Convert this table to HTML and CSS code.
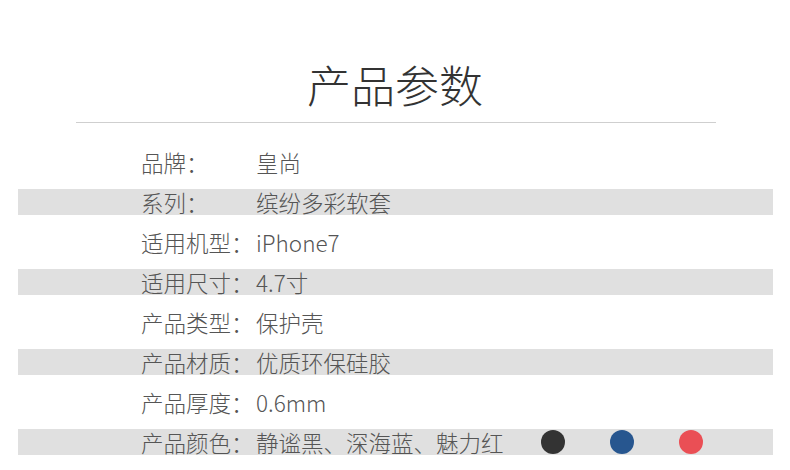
FILE: index.html
```html
<!DOCTYPE html>
<html lang="zh">
<head>
<meta charset="utf-8">
<link rel="stylesheet" href="styles.css">
</head>
<body>
<div class="page">
  <h1 class="title">产品参数</h1>
  <div class="rule"></div>
  <div class="specs">
    <div class="row"><span class="label">品牌：</span><span class="value">皇尚</span></div>
    <div class="row band"><span class="label">系列：</span><span class="value">缤纷多彩软套</span></div>
    <div class="row"><span class="label">适用机型：</span><span class="value">iPhone7</span></div>
    <div class="row band"><span class="label">适用尺寸：</span><span class="value">4.7寸</span></div>
    <div class="row"><span class="label">产品类型：</span><span class="value">保护壳</span></div>
    <div class="row band"><span class="label">产品材质：</span><span class="value">优质环保硅胶</span></div>
    <div class="row"><span class="label">产品厚度：</span><span class="value">0.6mm</span></div>
    <div class="row band"><span class="label">产品颜色：</span><span class="value">静谧黑、深海蓝、魅力红</span>
      <span class="swatches">
        <span class="dot black"></span>
        <span class="dot blue"></span>
        <span class="dot red"></span>
      </span>
    </div>
  </div>
</div>
</body>
</html>
```

FILE: styles.css
```css
html, body {
  margin: 0;
  padding: 0;
  background: #ffffff;
}
.page {
  width: 790px;
  height: 470px;
  overflow: hidden;
  font-family: "Noto Sans CJK SC", "Noto Sans", sans-serif;
  color: #555555;
}
.title {
  margin: 0;
  padding-top: 56px;
  height: 56px;
  line-height: 56px;
  text-align: center;
  font-size: 44px;
  font-weight: 300;
  color: #333333;
  letter-spacing: 0;
}
.rule {
  margin: 10px 74px 0 76px;
  height: 0;
  border-top: 1px solid #cfcfcf;
}
.specs {
  margin: 26px 17px 0 18px;
  display: flex;
  flex-direction: column;
  gap: 14px;
}
.row {
  height: 26px;
  display: flex;
  align-items: center;
  padding-left: 123px;
  font-size: 22.5px;
  font-weight: 300;
  line-height: 26px;
  white-space: nowrap;
}
.row.band {
  background: #e0e0e0;
}
.label {
  width: 115px;
  flex: none;
}
.value {
  flex: none;
}
.swatches {
  display: flex;
  gap: 45px;
  margin-left: 37px;
}
.dot {
  width: 24px;
  height: 24px;
  border-radius: 50%;
}
.dot.black { background: #333333; }
.dot.blue { background: #27568f; }
.dot.red { background: #ea4f55; }
```
